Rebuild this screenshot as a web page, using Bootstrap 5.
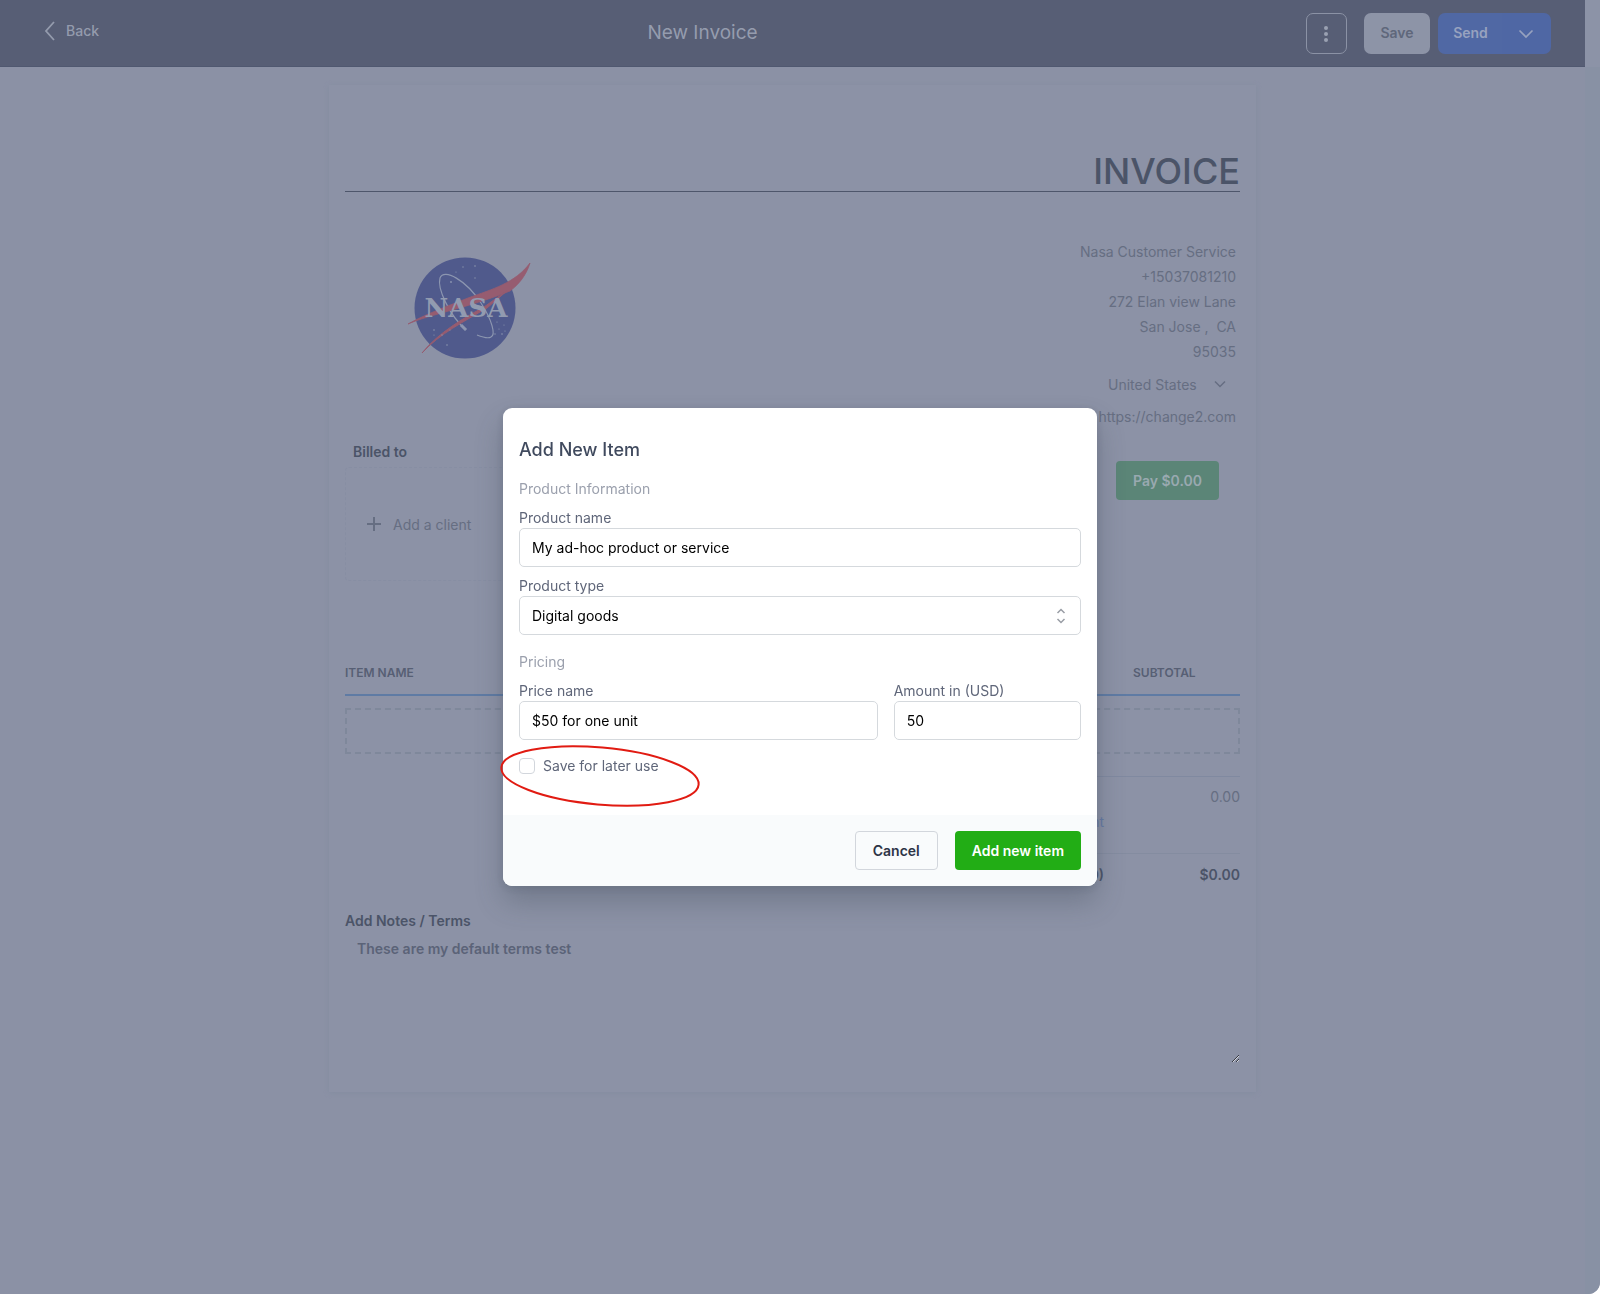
<!DOCTYPE html>
<html lang="en">
<head>
<meta charset="utf-8">
<meta name="viewport" content="width=device-width, initial-scale=1">
<title>New Invoice</title>
<link href="https://cdn.jsdelivr.net/npm/bootstrap@5.3.0/dist/css/bootstrap.min.css" rel="stylesheet">
<style>
  :root { --ink: #4b5468; --soft: #666e82; --veil: #8b91a5; }
  body { font-family: Inter, "Liberation Sans", sans-serif; font-size: 14px; line-height: 25px; color: var(--ink); background: #fff; }
  .shell { min-height: 100vh; background: var(--veil); border-bottom-right-radius: 12px; overflow: hidden; }
  .gutter { width: 15px; background: #8891a4; }
  .gutter-top { height: 67px; background: #8c93a7; }

  .topbar { height: 67px; background: #575e75; border-bottom: 1px solid #505870; padding: 0 34px 0 44px; }
  .topbar, .topbar a { color: #949bad; }
  .page-title { font-size: 19px; font-weight: 400; color: #959cae; }
  .back-link { font-weight: 500; gap: 11px; padding-bottom: 5px; }
  .tool { height: 41px; border-radius: 7px; font-size: 14px; font-weight: 600; border: 1px solid transparent; line-height: 20px; }
  .tool-more { width: 41px; border-color: #8b92a5; color: #9aa1b2; margin-right: 17px; }
  .tool-save { width: 66px; background: #8d94a7; color: #5f677b; }
  .tool-send { width: 65px; background: #5068a4; color: #97a2bf; }
  .tool-drop { width: 49px; background: #4f67a4; color: #97a2bf; }

  .sheet { width: 927px; max-width: 100%; margin: 18px auto 0; padding: 66px 16px 29px; background: #8c92a6; box-shadow: 0 1px 5px #848da0; }
  .invoice-title { font-size: 36px; font-weight: 500; line-height: 40px; border-bottom: 1px solid #4e566b; }
  .seller { padding-top: 47px; }
  .plain-field { width: 240px; height: 25px; padding: 0 4px; border: 0; background: transparent; color: var(--soft); text-align: right; }
  .country { width: 136px; height: 40px; padding: 0 4px; border: 0; appearance: none; color: var(--soft);
    background: url("data:image/svg+xml,%3Csvg xmlns='http://www.w3.org/2000/svg' viewBox='0 0 12 12'%3E%3Cpath d='M1 3.5 6 8.5 11 3.5' fill='none' stroke='%23666e82' stroke-width='1.5'/%3E%3C/svg%3E") no-repeat right 14px center / 12px 12px; }
  .pay { height: 39px; padding: 0 17px; margin: 32px 21px 0 0; border: 0; border-radius: 4px; background: #5b8577; color: #99a9b0; font-weight: 600; }
  .logo { margin: 46px 0 0 61px; }
  .billed { margin: 71px 0 3px 8px; font-weight: 600; }
  .client-box { width: 280px; height: 114px; border: 1px dashed #878ea3; border-radius: 4px; background: transparent; color: var(--soft); padding: 0 20px; gap: 11px; }
  .items { margin-top: 83px; font-size: 12px; }
  .items th { height: 31px; padding: 0 0 12px; line-height: 18px; font-weight: 600; border-bottom: 2px solid #5f7ba4; color: #575f74; }
  .subtotal-head { width: 107px; }
  .drop-row { height: 46px; margin-top: 12px; border: 2px dashed #7f889b; background: transparent; width: 100%; }
  .totals { width: 440px; margin-top: 22px; border-top: 1px solid #8089a0; padding-top: 7px; }
  .totals-line { display: grid; grid-template-columns: 304px 1fr; text-align: right; }
  .soft { color: var(--soft); }
  .grand { margin-top: 19px; padding-top: 8px; border-top: 1px solid #848ca0; font-weight: 600; }
  .discount { color: #667aa4; text-decoration: none; }
  .notes { margin-top: 21px; font-weight: 600; }
  .notes textarea { display: block; width: 100%; height: 130px; padding: 3px 12px; border: 0; background: transparent; color: #5b6378; font-weight: 600; resize: vertical; }

  .modal-dialog { max-width: 594px; }
  .modal-content { border: 0; border-radius: 9px; box-shadow: 0 16px 28px rgba(60, 70, 85, .32), 0 2px 8px rgba(60, 70, 85, .18); }
  .modal-body { padding: 27px 16px 39px; }
  .modal-title { font-size: 18px; font-weight: 500; line-height: 30px; margin-bottom: 13px; color: #404a5e; }
  .section-name { color: #9ba0ad; font-size: 14px; line-height: 22px; font-weight: 400; margin: 0 0 9px; }
  .field-label { display: block; line-height: 18px; color: #5f6679; margin-bottom: 1px; }
  .next-field { margin-top: 10px; }
  .box-field { height: 39px; padding: 0 12px; border: 1px solid #d5d9dd; border-radius: 5px; font-size: 14px; color: #000; background-color: #fff; box-shadow: none; }
  .kind { background-image: url("data:image/svg+xml,%3Csvg xmlns='http://www.w3.org/2000/svg' viewBox='0 0 10 16'%3E%3Cpath d='M1.5 5 5 1.5 8.5 5M1.5 11 5 14.5 8.5 11' fill='none' stroke='%23999da5' stroke-width='1.5'/%3E%3C/svg%3E"); background-size: 10px 16px; background-position: right 14px center; }
  .keep { margin-top: 16px; gap: 8px; color: #5f6679; line-height: 20px; }
  .keep .form-check-input { width: 16px; height: 16px; margin: 0; border: 1px solid #d2d6dc; border-radius: 4px; }
  .modal-footer { padding: 16px; gap: 17px; background: #f9fbfc; border: 0; border-radius: 0 0 9px 9px; }
  .modal-footer > * { margin: 0; height: 39px; padding: 0 17px; font-size: 14px; font-weight: 600; border-radius: 4px; }
  .cancel { border: 1px solid #d2d6dc; color: #2d3446; }
  .add-item, .add-item:hover { background: #22ad15; color: #fff; border: 0; }
  .ring { position: absolute; left: -8px; top: 333px; pointer-events: none; }
</style>
</head>
<body>
<div class="shell d-flex">
  <div class="flex-grow-1">
    <header class="topbar d-flex align-items-center justify-content-between">
      <a href="#" class="back-link d-flex align-items-center text-decoration-none">
        <svg width="11" height="20" viewBox="0 0 11 20" fill="none" stroke="currentColor" stroke-width="1.8"><path d="M10 1 2 10l8 9"/></svg>
        Back
      </a>
      <h1 class="page-title m-0">New Invoice</h1>
      <div class="d-flex">
        <button type="button" class="btn tool tool-more p-0" aria-label="More">
          <svg width="6" height="18" viewBox="0 0 6 18" fill="currentColor"><circle cx="3" cy="3" r="2"/><circle cx="3" cy="9" r="2"/><circle cx="3" cy="15" r="2"/></svg>
        </button>
        <button type="button" class="btn tool tool-save p-0 me-2">Save</button>
        <div class="btn-group">
          <button type="button" class="btn tool tool-send p-0">Send</button>
          <button type="button" class="btn tool tool-drop p-0" aria-label="Send options">
            <svg width="16" height="10" viewBox="0 0 16 10" fill="none" stroke="currentColor" stroke-width="1.7"><path d="m1.5 1.5 6.500 6.500 6.500-6.500"/></svg>
          </button>
        </div>
      </div>
    </header>

    <main class="sheet">
      <h2 class="invoice-title text-end m-0">INVOICE</h2>
      <div class="d-flex justify-content-between">
        <div>
          <svg class="logo d-block" width="128" height="130" viewBox="0 0 128 130" role="img" aria-label="NASA">
            <circle cx="59" cy="70" r="50.500" fill="#505a8c"/>
            <g fill="none" stroke="#8c96b0">
              <path stroke-width="1.200" d="M60 92C43 77 31 50 34 40 38 30 60 42 75 65c11 17 15 32 10 34-3 2-9 0-14-2"/>
              <path stroke-width="3" d="m55 87 5 5"/>
            </g>
            <path fill="#965c70" stroke="#965c70" stroke-width=".8" stroke-linejoin="round" d="M2 86C20 76 42 68 62 60c25-9 47-15 62-35-4 13-12 22-20 28C74 65 49 71 25 78 15 81 9 83 2 86Z"/>
            <path fill="#965c70" stroke="#965c70" stroke-width="1" stroke-linejoin="round" d="M16 115c17-21 42-35 62-46l24-17-21 18C59 83 33 96 16 115Z"/>
            <text x="60" y="79" text-anchor="middle" font-family="DejaVu Serif, serif" font-weight="700" font-size="26" fill="#929bb0">NASA</text>
            <g fill="#8c96b0"><circle cx="57" cy="29" r=".7"/><circle cx="69" cy="28" r=".8"/><circle cx="50" cy="34" r=".6"/><circle cx="45" cy="44" r=".9"/><circle cx="69" cy="40" r=".7"/><circle cx="28" cy="92" r=".8"/><circle cx="28" cy="97" r=".6"/><circle cx="36" cy="97" r=".7"/><circle cx="41" cy="107" r=".8"/><circle cx="44" cy="92" r=".5"/><circle cx="91" cy="84" r=".6"/><circle cx="93" cy="91" r=".6"/><circle cx="98" cy="87" r=".6"/><circle cx="89" cy="96" r=".7"/><circle cx="96" cy="96" r=".8"/><circle cx="99" cy="93" r=".6"/></g>
          </svg>
          <div class="billed">Billed to</div>
          <button type="button" class="client-box d-flex align-items-center">
            <svg width="16" height="16" viewBox="0 0 16 16" stroke="currentColor" stroke-width="2"><path d="M8 1v14M1 8h14"/></svg>
            Add a client
          </button>
        </div>
        <div class="seller d-flex flex-column align-items-end">
          <input class="plain-field" aria-label="Company" value="Nasa Customer Service">
          <input class="plain-field" aria-label="Phone" value="+15037081210">
          <input class="plain-field" aria-label="Street" value="272 Elan view Lane">
          <input class="plain-field" aria-label="City and state" value="San Jose ,&nbsp; CA">
          <input class="plain-field" aria-label="Postcode" value="95035">
          <select class="country" aria-label="Country"><option>United States</option></select>
          <input class="plain-field" aria-label="Website" value="https://change2.com">
          <button type="button" class="pay">Pay $0.00</button>
        </div>
      </div>

      <table class="items w-100">
        <thead><tr><th>ITEM NAME</th><th class="subtotal-head">SUBTOTAL</th></tr></thead>
      </table>
      <button type="button" class="drop-row d-block" aria-label="Add an item"></button>

      <div class="totals ms-auto">
        <div class="totals-line"><span></span><span class="soft">0.00</span></div>
        <div class="totals-line"><a href="#" class="discount">Add discount</a></div>
        <div class="totals-line grand"><span>Total (USD)</span><span>$0.00</span></div>
      </div>

      <div class="notes">
        <label for="terms">Add Notes / Terms</label>
        <textarea id="terms">These are my default terms test</textarea>
      </div>
    </main>
  </div>
  <div class="gutter flex-shrink-0"><div class="gutter-top"></div></div>
</div>

<div class="modal d-block" tabindex="-1" role="dialog" aria-labelledby="dialogTitle">
  <div class="modal-dialog modal-dialog-centered">
    <form class="modal-content">
      <div class="modal-body">
        <h2 class="modal-title" id="dialogTitle">Add New Item</h2>
        <h3 class="section-name">Product Information</h3>
        <label class="field-label" for="pname">Product name</label>
        <input class="form-control box-field" id="pname" value="My ad-hoc product or service">
        <label class="field-label next-field" for="ptype">Product type</label>
        <select class="form-select box-field kind" id="ptype"><option>Digital goods</option></select>
        <h3 class="section-name mt-3">Pricing</h3>
        <div class="d-flex gap-3">
          <div class="flex-grow-1">
            <label class="field-label" for="price">Price name</label>
            <input class="form-control box-field" id="price" value="$50 for one unit">
          </div>
          <div class="col-4">
            <label class="field-label" for="amount">Amount in (USD)</label>
            <input class="form-control box-field" id="amount" value="50">
          </div>
        </div>
        <div class="keep d-flex align-items-center">
          <input class="form-check-input" type="checkbox" id="keep">
          <label for="keep">Save for later use</label>
        </div>
      </div>
      <div class="modal-footer">
        <button type="button" class="btn cancel">Cancel</button>
        <button type="button" class="btn add-item">Add new item</button>
      </div>
      <svg class="ring" width="210" height="70" viewBox="0 0 210 70" fill="none" stroke="#e11b12" stroke-width="2"><ellipse cx="105" cy="35" rx="99" ry="28.500" transform="rotate(5 105 35)"/></svg>
    </form>
  </div>
</div>
<script src="https://cdn.jsdelivr.net/npm/bootstrap@5.3.0/dist/js/bootstrap.bundle.min.js"></script>
</body>
</html>
